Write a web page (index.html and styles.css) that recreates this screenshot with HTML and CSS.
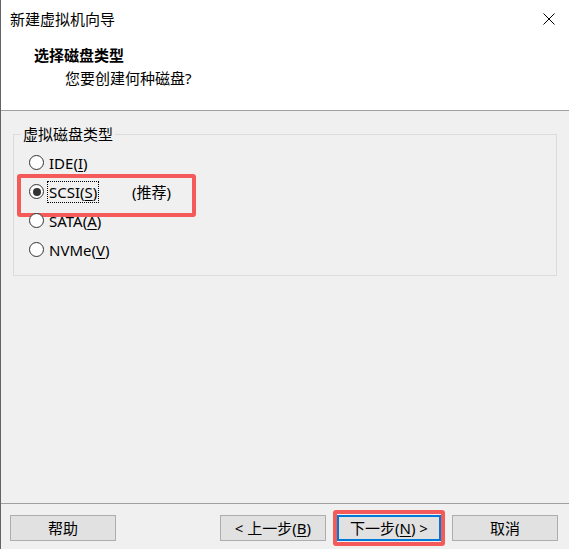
FILE: index.html
```html
<!DOCTYPE html>
<html lang="zh-CN">
<head>
<meta charset="utf-8">
<title>新建虚拟机向导</title>
<link rel="stylesheet" href="styles.css">
</head>
<body>
<div class="window">
  <div class="top">
    <div class="titlebar">
      <span class="title">新建虚拟机向导</span>
      <svg class="close" width="12" height="12" viewBox="0 0 12 12"><path d="M0.5 0.5L11.5 11.5M11.5 0.5L0.5 11.5" stroke="#000" stroke-width="1" fill="none"/></svg>
    </div>
    <div class="header">
      <div class="h-title">选择磁盘类型</div>
      <div class="h-sub">您要创建何种磁盘?</div>
    </div>
  </div>
  <div class="body">
    <fieldset class="group">
      <legend>虚拟磁盘类型</legend>
      <div class="row"><span class="radio"></span><span class="lbl">IDE(<u>I</u>)</span></div>
      <div class="row hl"><span class="radio checked"></span><span class="lblcol"><span class="lbl focus">SCSI(<u>S</u>)</span></span><span class="tag">(推荐)</span></div>
      <div class="row"><span class="radio"></span><span class="lbl">SATA(<u>A</u>)</span></div>
      <div class="row"><span class="radio"></span><span class="lbl">NVMe(<u>V</u>)</span></div>
    </fieldset>
  </div>
  <div class="footer">
    <button class="btn w106">帮助</button>
    <div class="spacer"></div>
    <button class="btn w106">&lt; 上一步(<u>B</u>)</button>
    <button class="btn next">下一步(<u>N</u>) &gt;</button>
    <button class="btn w106">取消</button>
  </div>
</div>
</body>
</html>
```
FILE: styles.css
```css
* { box-sizing: border-box; }
html, body { margin: 0; padding: 0; }
body {
  width: 569px;
  height: 549px;
  overflow: hidden;
  font-family: "Noto Sans", "Noto Sans CJK SC", sans-serif;
  font-size: 15px;
  color: #000;
  background: #f0f0f0;
}
.window {
  width: 569px;
  height: 549px;
  border-left: 1px solid #646464;
  display: flex;
  flex-direction: column;
  background: #f0f0f0;
}
.top {
  height: 111px;
  background: #fff;
  border-bottom: 1px solid #a0a0a0;
  flex: none;
}
.titlebar {
  height: 38px;
  display: flex;
  align-items: center;
  padding: 0 14px 0 9px;
}
.title { flex: 1; line-height: 20px; }
.close { display: block; }
.header { padding-top: 6px; }
.h-title {
  font-weight: bold;
  padding-left: 33px;
  line-height: 22px;
}
.h-sub {
  padding-left: 64px;
  line-height: 22px;
  margin-top: 1px;
}
.body {
  flex: 1;
  padding: 0 12px 0 12px;
}
.group {
  margin: 13px 0 0 0;
  padding: 4px 0 11px 7px;
  border: 1px solid #dcdcdc;
  min-width: 0;
}
.group legend {
  padding: 0 2px;
  line-height: 20px;
}
.row {
  position: relative;
  height: 29px;
  display: flex;
  align-items: center;
  padding-left: 8px;
}
.radio {
  width: 15px;
  height: 15px;
  border: 1px solid #333;
  border-radius: 50%;
  background: #fff;
  margin-right: 4px;
  display: flex;
  align-items: center;
  justify-content: center;
  flex: none;
}
.radio.checked::after {
  content: "";
  width: 8px;
  height: 8px;
  border-radius: 50%;
  background: #333;
}
.lbl { line-height: 18px; padding: 0 1px; }
.lbl u, .btn u { text-decoration-thickness: 1px; text-underline-offset: 2px; }
.lblcol { width: 84px; flex: none; }
.focus { outline: 1px dotted #000; outline-offset: 0; }
.hl::after {
  content: "";
  position: absolute;
  left: -4px;
  top: -3px;
  width: 171px;
  height: 35px;
  border: 4px solid #f55a5a;
  border-radius: 3px;
}
.footer {
  height: 46px;
  flex: none;
  border-top: 1px solid #a0a0a0;
  display: flex;
  align-items: flex-start;
  padding: 11px 11px 0 9px;
  gap: 11px;
}
.spacer { flex: 1; }
.btn {
  position: relative;
  height: 26px;
  border: 1px solid #adadad;
  background: #e1e1e1;
  font-family: inherit;
  font-size: 15px;
  color: #000;
  padding: 0;
  line-height: 22px;
}
.w106 { width: 106px; }
.next {
  width: 104px;
  border: 1px solid #0078d7;
  box-shadow: inset 0 0 0 1px #0078d7;
}
.next::after {
  content: "";
  position: absolute;
  left: -5px;
  top: -6px;
  right: -5px;
  bottom: -6px;
  border: 4px solid #f55a5a;
  border-radius: 3px;
}
```
